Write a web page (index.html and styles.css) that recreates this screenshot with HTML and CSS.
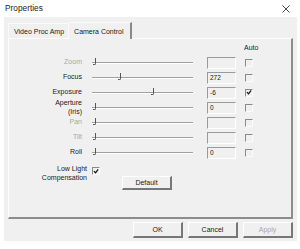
FILE: index.html
```html
<!DOCTYPE html>
<html>
<head>
<meta charset="utf-8">
<link rel="stylesheet" href="styles.css">
</head>
<body>
<div class="window">
  <div class="titlebar">
    <span class="title">Properties</span>
    <svg class="close" width="8" height="8" viewBox="0 0 8 8"><path d="M0.5 0.5 L7.5 7.5 M7.5 0.5 L0.5 7.5" stroke="#333" stroke-width="0.9" fill="none"/></svg>
  </div>
  <div class="client">
    <div class="tabs">
      <div class="tab">Video Proc Amp</div>
      <div class="tab selected">Camera Control</div>
    </div>
    <div class="panel">
      <div class="auto-head">Auto</div>
      <div class="rows">
        <div class="row">
          <div class="label disabled">Zoom</div>
          <div class="slider"><span class="thumb" style="left:1px"></span></div>
          <div class="edit"></div>
          <div class="check"></div>
        </div>
        <div class="row">
          <div class="label">Focus</div>
          <div class="slider"><span class="thumb" style="left:26px"></span></div>
          <div class="edit">272</div>
          <div class="check"></div>
        </div>
        <div class="row">
          <div class="label">Exposure</div>
          <div class="slider"><span class="thumb" style="left:59px"></span></div>
          <div class="edit">-6</div>
          <div class="check checked"><svg width="7" height="7" viewBox="0 0 7 7"><path d="M1 3 L3 5 L6 1" stroke="#111" stroke-width="1.4" fill="none"/></svg></div>
        </div>
        <div class="row">
          <div class="label two">Aperture<br>(Iris)</div>
          <div class="slider"><span class="thumb" style="left:1px"></span></div>
          <div class="edit">0</div>
          <div class="check"></div>
        </div>
        <div class="row">
          <div class="label disabled">Pan</div>
          <div class="slider"><span class="thumb" style="left:1px"></span></div>
          <div class="edit"></div>
          <div class="check"></div>
        </div>
        <div class="row">
          <div class="label disabled">Tilt</div>
          <div class="slider"><span class="thumb" style="left:1px"></span></div>
          <div class="edit"></div>
          <div class="check"></div>
        </div>
        <div class="row">
          <div class="label">Roll</div>
          <div class="slider"><span class="thumb" style="left:1px"></span></div>
          <div class="edit">0</div>
          <div class="check"></div>
        </div>
      </div>
      <div class="lowlight">
        <div class="ll-label">Low Light<br>Compensation</div>
        <div class="check checked ll-check"><svg width="7" height="7" viewBox="0 0 7 7"><path d="M1 3 L3 5 L6 1" stroke="#111" stroke-width="1.4" fill="none"/></svg></div>
        <div class="btn default-btn">Default</div>
      </div>
    </div>
    <div class="buttons">
      <div class="btn">OK</div>
      <div class="btn">Cancel</div>
      <div class="btn disabled">Apply</div>
    </div>
  </div>
</div>
</body>
</html>
```
FILE: styles.css
```css
* { box-sizing: border-box; }
html, body {
  margin: 0;
  padding: 0;
  background: #ffffff;
}
body {
  width: 300px;
  height: 249px;
  overflow: hidden;
  font-family: "Liberation Sans", Arial, sans-serif;
  font-size: 7px;
  color: #1a1a1a;
}
.window {
  width: 300px;
  height: 249px;
  display: flex;
  flex-direction: column;
}
.titlebar {
  height: 17px;
  display: flex;
  align-items: center;
  justify-content: space-between;
  padding: 0 10px 1px 5px;
  background: #ffffff;
}
.title {
  font-size: 8.3px;
  color: #222;
}
.close {
  display: block;
  margin-top: 1px;
}
.client {
  margin: 0 3px 0 4px;
  height: 224px;
  background: #f0f0f0;
  padding: 4px 4px 3px 4px;
  display: flex;
  flex-direction: column;
}
.tabs {
  display: flex;
  align-items: flex-end;
  height: 17px;
}
.tab {
  height: 15px;
  padding: 0 4px 0 5px;
  display: flex;
  align-items: center;
  line-height: 9px;
  border-top: 1px solid #fafafa;
  border-left: 1px solid #fafafa;
}
.tab.selected {
  height: 17px;
  padding: 0 6px 0 5px;
  margin-bottom: -1px;
  background: #f0f0f0;
  border-right: 2px solid #8a8a8a;
  position: relative;
  z-index: 1;
}
.panel {
  width: 285px;
  height: 181px;
  border-top: 1px solid #fdfdfd;
  border-left: 1px solid #fdfdfd;
  border-right: 2px solid #8c8c8c;
  border-bottom: 2px solid #8c8c8c;
  padding-top: 4px;
}
.auto-head {
  margin-left: 235px;
  line-height: 9px;
  height: 12px;
}
.rows {
  display: flex;
  flex-direction: column;
}
.row {
  display: flex;
  align-items: center;
  height: 15px;
}
.label {
  width: 73px;
  text-align: right;
  line-height: 9px;
  margin-top: -3px;
}
.label.two {
  margin-top: -2px;
}
.label.disabled {
  color: #a8a8a8;
}
.slider {
  position: relative;
  width: 101px;
  height: 2px;
  margin-left: 10px;
  border-top: 1px solid #a0a0a0;
  border-bottom: 1px solid #ffffff;
}
.thumb {
  position: absolute;
  top: -5px;
  width: 3px;
  height: 7px;
  border-right: 1px solid #555;
  border-bottom: 1px solid #555;
  border-bottom-right-radius: 2px;
}
.edit {
  width: 29px;
  height: 12px;
  margin-left: 14px;
  border-top: 1px solid #9a9a9a;
  border-left: 1px solid #9a9a9a;
  border-right: 1px solid #ffffff;
  border-bottom: 1px solid #ffffff;
  padding-left: 2px;
  line-height: 10px;
  font-size: 6.5px;
}
.check {
  width: 8px;
  height: 8px;
  margin-left: 9px;
  border-top: 1px solid #8a8a8a;
  border-left: 1px solid #8a8a8a;
  border-right: 1px solid #fbfbfb;
  border-bottom: 1px solid #fbfbfb;
  display: flex;
  align-items: center;
  justify-content: center;
}
.check svg { display: block; }
.lowlight {
  display: flex;
  align-items: flex-start;
  margin-top: 4px;
}
.ll-label {
  width: 78px;
  text-align: right;
  line-height: 9px;
}
.ll-check {
  margin-left: 5px;
  margin-top: 3px;
}
.btn {
  width: 50px;
  height: 16px;
  display: flex;
  align-items: center;
  justify-content: center;
  background: #f0f0f0;
  border-top: 1px solid #ffffff;
  border-left: 1px solid #ffffff;
  border-right: 2px solid #777;
  border-bottom: 2px solid #777;
  line-height: 9px;
}
.btn.disabled {
  color: #a8a8a8;
}
.default-btn {
  margin-left: 22px;
  margin-top: 12px;
  height: 14px;
}
.buttons {
  display: flex;
  justify-content: flex-end;
  gap: 5px;
  margin-top: 3px;
}
```
